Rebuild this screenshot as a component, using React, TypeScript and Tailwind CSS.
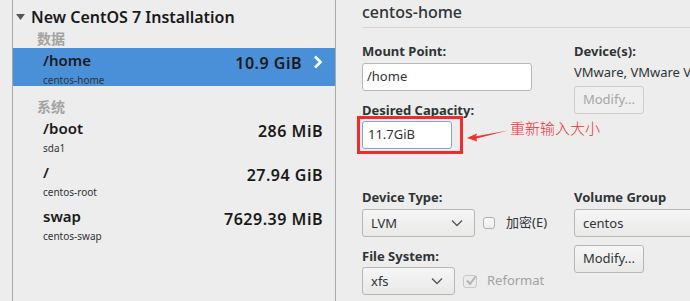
import React from "react";

const FONT = { fontFamily: '"Noto Sans", "Noto Sans CJK SC", sans-serif' };

type Mount = { name: string; sub: string; size: string; selected?: boolean };

const dataMounts: Mount[] = [{ name: "/home", sub: "centos-home", size: "10.9 GiB", selected: true }];
const systemMounts: Mount[] = [
  { name: "/boot", sub: "sda1", size: "286 MiB" },
  { name: "/", sub: "centos-root", size: "27.94 GiB" },
  { name: "swap", sub: "centos-swap", size: "7629.39 MiB" },
];

function Chevron({ className }: { className?: string }) {
  return (
    <svg width="10" height="14" viewBox="0 0 10 14" className={className}>
      <polyline points="2,1.5 7.5,7 2,12.5" fill="none" stroke="currentColor" strokeWidth="2.6" />
    </svg>
  );
}

function DownArrow() {
  return (
    <svg width="12" height="8" viewBox="0 0 12 8" className="text-[#555]">
      <polyline points="1,1.5 6,6.5 11,1.5" fill="none" stroke="currentColor" strokeWidth="1.3" />
    </svg>
  );
}

function MountRow({ m }: { m: Mount }) {
  return (
    <div
      className={
        "flex justify-between pl-[30px] pr-[12px] " +
        (m.selected ? "bg-[#4a90d9] h-[38px] pt-[3px]" : "h-[44px]")
      }
    >
      <div className="flex flex-col">
        <span className="text-[15px] leading-[18px] font-semibold text-[#1a1a1a]">{m.name}</span>
        <span className="text-[10px] leading-[14px] mt-[4px] text-[#2e3436]">{m.sub}</span>
      </div>
      <div className="flex items-start mt-[3px]">
        <span className="text-[16px] leading-[18px] font-semibold tracking-[0.5px] text-[#1a1a1a]">{m.size}</span>
        {m.selected && <Chevron className="text-white ml-[11px] mt-[1px]" />}
      </div>
    </div>
  );
}

function Select({ value, width }: { value: string; width: string }) {
  return (
    <div
      className={
        "h-[28px] flex items-center justify-between pl-[8px] pr-[11px] rounded-[3px] border border-[#b6b6b3] bg-gradient-to-b from-[#f6f6f6] to-[#e9e9e8] text-[13px] text-[#2e3436] " +
        width
      }
    >
      <span className="mt-[1px]">{value}</span>
      <DownArrow />
    </div>
  );
}

export default function App() {
  return (
    <div className="w-[690px] h-[301px] bg-[#ededed] flex overflow-hidden" style={FONT}>
      <div className="ml-[12px] w-[324px] h-full border-x border-[#a9a9a9] flex flex-col">
        <div className="flex items-center h-[32px] pl-[3px] pt-[1px]">
          <svg width="9" height="6" viewBox="0 0 9 6" className="text-[#555]">
            <polygon points="0,0 9,0 4.5,6" fill="currentColor" />
          </svg>
          <span className="ml-[6px] text-[16px] font-semibold text-[#1a1a1a]">New CentOS 7 Installation</span>
        </div>
        <div className="pl-[24px] h-[16px] text-[14px] leading-[16px] text-[#a3a3a3] font-semibold -mt-[1px]">数据</div>
        <div className="mt-[1px]">
          {dataMounts.map((m) => (
            <MountRow key={m.name} m={m} />
          ))}
        </div>
        <div className="pl-[24px] h-[32px] pt-[13px] text-[14px] leading-[16px] text-[#a3a3a3] font-semibold">系统</div>
        <div className="mt-[1px]">
          {systemMounts.map((m) => (
            <MountRow key={m.name} m={m} />
          ))}
        </div>
      </div>

      <div className="ml-[26px] flex-1 min-w-0 flex flex-col text-[#2e3436]">
        <div className="text-[16px] leading-[22px] font-medium pt-[1px] h-[28px] border-b border-[#d4d4d4]">centos-home</div>

        <div className="flex mt-[15px]">
          <div className="w-[212px] shrink-0 flex flex-col">
            <div className="text-[13px] leading-[16px] font-bold">Mount Point:</div>
            <div className="mt-[4px] w-[170px] h-[28px] rounded-[3px] border border-[#b6b6b3] bg-white flex items-center px-[4px] text-[13px]">
              /home
            </div>
            <div className="mt-[11px] text-[13px] leading-[16px] font-bold">Desired Capacity:</div>
            <div className="relative mt-[3px]">
              <div className="w-[90px] h-[28px] rounded-[3px] border border-[#7fa6d4] bg-white flex items-center px-[5px] text-[13px]">
                11.7GiB
              </div>
              <div className="absolute left-[-5px] top-[-5px] w-[106px] h-[38px] border-[3px] border-[#f22a2a]" />
              <svg className="absolute left-[103px] top-[8px]" width="44" height="14" viewBox="0 0 44 14">
                <path d="M2,9 L12,4.5 L11,7.2 L43,1.5 L11.5,9.5 L12,12.5 Z" fill="#f23030" />
              </svg>
              <div
                className="absolute left-[148px] top-[-3px] whitespace-nowrap text-[15px] leading-[20px] font-light text-[#f23030]"
                style={{ fontFamily: '"Noto Sans CJK SC", sans-serif' }}
              >
                重新输入大小
              </div>
            </div>
          </div>
          <div className="flex flex-col">
            <div className="text-[13px] leading-[16px] font-bold">Device(s):</div>
            <div className="mt-[5px] text-[13px] leading-[16px] whitespace-nowrap">VMware, VMware Virtual S</div>
            <div className="mt-[6px] w-[70px] h-[28px] rounded-[3px] border border-[#cdcdcb] bg-[#efefef] flex items-center justify-center text-[13px] text-[#a6a6a6]">
              Modify...
            </div>
          </div>
        </div>

        <div className="flex mt-[40px]">
          <div className="w-[212px] shrink-0 flex flex-col">
            <div className="text-[13px] leading-[16px] font-bold">Device Type:</div>
            <div className="mt-[4px] flex items-center">
              <Select value="LVM" width="w-[113px]" />
              <div className="ml-[8px] w-[12px] h-[12px] rounded-[3px] border border-[#b0b0ad] bg-gradient-to-b from-[#fafafa] to-[#ececec]" />
              <span className="ml-[11px] text-[13px]">加密(E)</span>
            </div>
            <div className="mt-[11px] text-[13px] leading-[16px] font-bold">File System:</div>
            <div className="mt-[3px] flex items-center">
              <Select value="xfs" width="w-[93px]" />
              <div className="ml-[8px] w-[14px] h-[13px] rounded-[3px] border border-[#c8c8c6] bg-[#ececec] relative">
                <svg className="absolute left-[1px] top-[-2px]" width="13" height="13" viewBox="0 0 13 13">
                  <polyline points="2,6.5 5,10 11,2" fill="none" stroke="#b4b4b4" strokeWidth="2" />
                </svg>
              </div>
              <span className="ml-[10px] text-[13px] text-[#a3a3a3]">Reformat</span>
            </div>
          </div>
          <div className="flex flex-col min-w-0">
            <div className="text-[13px] leading-[16px] font-bold">Volume Group</div>
            <div className="mt-[4px] w-[140px] shrink-0">
              <Select value="centos" width="w-[140px]" />
            </div>
            <div className="mt-[8px] w-[70px] h-[28px] rounded-[3px] border border-[#b6b6b3] bg-gradient-to-b from-[#f6f6f6] to-[#e9e9e8] flex items-center justify-center text-[13px]">
              Modify...
            </div>
          </div>
        </div>
      </div>
    </div>
  );
}
